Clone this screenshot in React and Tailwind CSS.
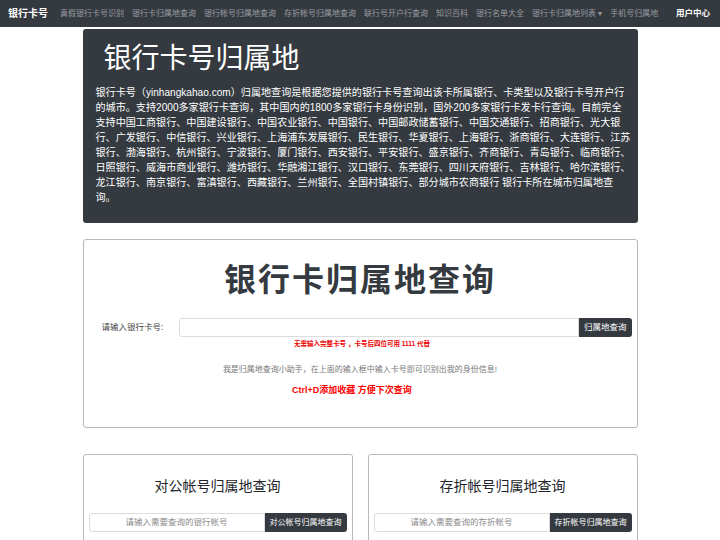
import React from 'react';

const font = { fontFamily: '"Liberation Sans", "Noto Sans CJK SC", sans-serif' };

const navLinks = [
  '真假银行卡号识别',
  '银行卡归属地查询',
  '银行帐号归属地查询',
  '存折帐号归属地查询',
  '联行号开户行查询',
  '知识百科',
  '银行名单大全',
];

const introLines = [
  '银行卡号（yinhangkahao.com）归属地查询是根据您提供的银行卡号查询出该卡所属银行、卡类型以及银行卡号开户行',
  '的城市。支持2000多家银行卡查询，其中国内的1800多家银行卡身份识别，国外200多家银行卡发卡行查询。目前完全',
  '支持中国工商银行、中国建设银行、中国农业银行、中国银行、中国邮政储蓄银行、中国交通银行、招商银行、光大银',
  '行、广发银行、中信银行、兴业银行、上海浦东发展银行、民生银行、华夏银行、上海银行、浙商银行、大连银行、江苏',
  '银行、渤海银行、杭州银行、宁波银行、厦门银行、西安银行、平安银行、盛京银行、齐商银行、青岛银行、临商银行、',
  '日照银行、威海市商业银行、潍坊银行、华融湘江银行、汉口银行、东莞银行、四川天府银行、吉林银行、哈尔滨银行、',
  '龙江银行、南京银行、富滇银行、西藏银行、兰州银行、全国村镇银行、部分城市农商银行 银行卡所在城市归属地查',
  '询。',
];

const SmallCard = ({ title, placeholder, button }) => (
  <div className="flex-1 border border-[#b8b8b8] rounded-[3px] bg-white px-[5px] pt-[20px] pb-[10px]">
    <h3 className="text-center text-[14px] text-[#212529] leading-[22px] mb-[16px]">{title}</h3>
    <div className="flex h-[19px]">
      <div className="flex-1 border border-[#dcdcdc] rounded-l-[3px] flex items-center justify-center text-[8.5px] text-[#8a8a8a]">
        {placeholder}
      </div>
      <button className="bg-[#343a40] text-white text-[8px] px-[5px] rounded-r-[3px]">{button}</button>
    </div>
  </div>
);

export default function App() {
  return (
    <div className="min-h-screen bg-white" style={font}>
      {/* Navbar */}
      <div className="h-[27px] bg-[#343a40] flex items-center pl-[8px] pr-[10px]">
        <span className="text-white font-bold text-[10px] mr-[12px]">银行卡号</span>
        <div className="flex items-center gap-[8px] text-[8px] text-[#9a9da1]">
          {navLinks.map((l) => (
            <span key={l}>{l}</span>
          ))}
          <span>银行卡归属地列表 ▾</span>
          <span>手机号归属地</span>
        </div>
        <span className="ml-auto text-white font-bold text-[8.5px]">用户中心</span>
      </div>

      <div className="w-[555px] mx-auto">
        {/* Jumbotron */}
        <div className="mt-[2px] bg-[#343a40] rounded-[3px] px-[13px] pt-[12px] pb-[18px] text-white">
          <h1 className="text-[28px] leading-[36px] pl-[8px] mb-[8px] font-normal">银行卡号归属地</h1>
          <p className="text-[10.1px] leading-[15px] whitespace-nowrap">
            {introLines.map((line, i) => (
              <span key={i} className="block h-[15px]">{line}</span>
            ))}
          </p>
        </div>

        {/* Main query card */}
        <div className="mt-[16px] border border-[#b8b8b8] rounded-[3px] h-[189px] px-[5px] pt-[22px]">
          <h2 className="text-center text-[32px] font-bold text-[#343a40] tracking-[2px] leading-[36px] mb-[20px]">
            银行卡归属地查询
          </h2>
          <div className="flex items-center h-[19px]">
            <span className="w-[90px] text-[8.5px] text-[#444] pl-[13px]">请输入银行卡号:</span>
            <div className="flex-1 h-full border border-[#dcdcdc] rounded-l-[3px]"></div>
            <button className="h-full bg-[#343a40] text-white text-[8.5px] px-[5px] rounded-r-[3px]">归属地查询</button>
          </div>
          <p className="text-center text-[6.5px] font-bold text-[#e00] mt-[2px] pl-[4px]">
            无需输入完整卡号 ，卡号后四位可用 1111 代替
          </p>
          <p className="text-center text-[8px] text-[#777] mt-[15px]">
            我是归属地查询小助手，在上面的输入框中输入卡号即可识别出我的身份信息!
          </p>
          <p className="text-center text-[9px] font-bold text-[#f00] mt-[8px] pr-[16px]">Ctrl+D添加收藏 方便下次查询</p>
        </div>

        {/* Small cards */}
        <div className="mt-[26px] flex gap-[15px]">
          <SmallCard title="对公帐号归属地查询" placeholder="请输入需要查询的银行帐号" button="对公帐号归属地查询" />
          <SmallCard title="存折帐号归属地查询" placeholder="请输入需要查询的存折帐号" button="存折帐号归属地查询" />
        </div>
      </div>
    </div>
  );
}
